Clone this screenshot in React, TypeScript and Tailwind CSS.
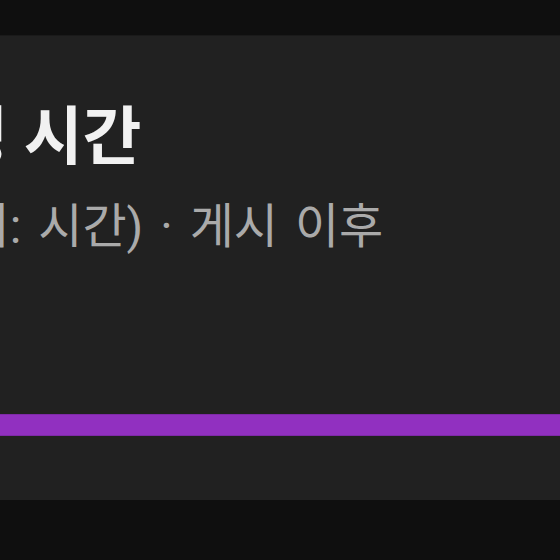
import React from 'react';

const App: React.FC = () => {
  return (
    <div className="w-[560px] h-[560px] bg-[#0f0f0f] overflow-hidden pt-[35px]" style={{ fontFamily: "Roboto, 'Noto Sans CJK KR', sans-serif" }}>
      <div className="h-[465px] bg-[#212121] border-t border-[#1a1a1a] overflow-hidden flex flex-col">
        <div className="mt-[70px] flex flex-col gap-[33px] whitespace-nowrap">
          <h2 className="ml-[-110px] text-[64px] leading-none font-bold text-[#f1f1f1]">시청 시간</h2>
          <p className="ml-[-95px] text-[48px] leading-none text-[#aaaaaa] [word-spacing:5px]">(단위: 시간) · 게시 이후</p>
        </div>
        <div className="mt-auto mb-[64px] h-[22px] bg-[#9130c0] border-y border-[#7f2aa8]" />
      </div>
    </div>
  );
};

export default App;
